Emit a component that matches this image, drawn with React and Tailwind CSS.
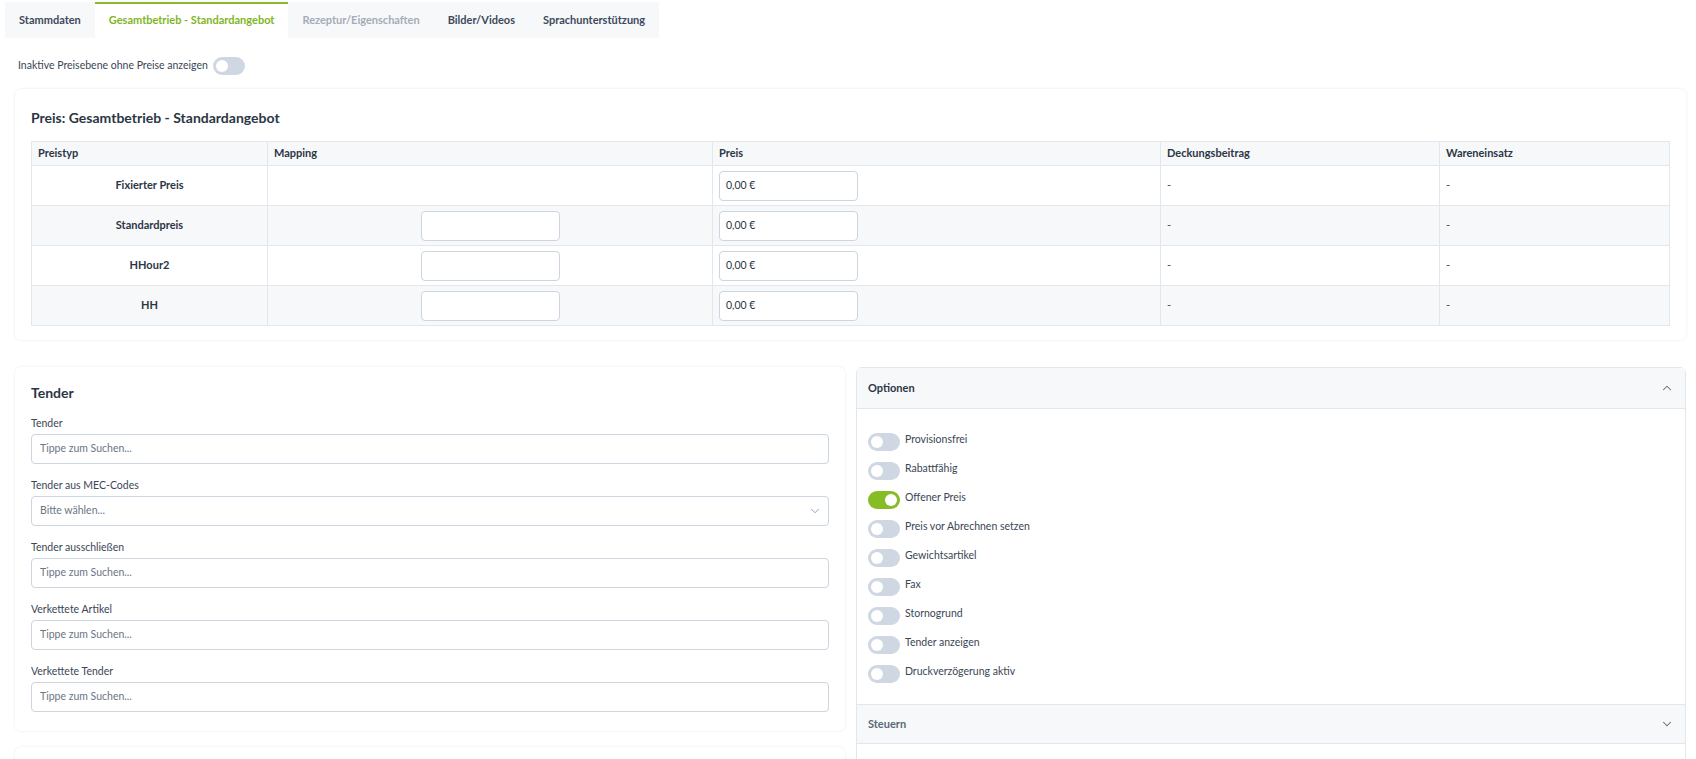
import React from "react";
import { ChevronDown, ChevronUp } from "lucide-react";

function Toggle({ on = false }) {
  return (
    <span
      className={
        "relative inline-block h-[18px] w-[32px] shrink-0 rounded-full " +
        (on ? "bg-[#86bc25]" : "bg-[#cfd7e2]")
      }
    >
      <span
        className={
          "absolute top-[3px] h-[12px] w-[12px] rounded-full bg-white " +
          (on ? "left-[17px]" : "left-[3px]")
        }
      />
    </span>
  );
}

const tabs = [
  { label: "Stammdaten", state: "normal" },
  { label: "Gesamtbetrieb - Standardangebot", state: "active" },
  { label: "Rezeptur/Eigenschaften", state: "disabled" },
  { label: "Bilder/Videos", state: "normal" },
  { label: "Sprachunterstützung", state: "normal" },
];

const rows = [
  { name: "Fixierter Preis", mapping: false },
  { name: "Standardpreis", mapping: true },
  { name: "HHour2", mapping: true },
  { name: "HH", mapping: true },
];

const fields = [
  { label: "Tender", placeholder: "Tippe zum Suchen..." },
  { label: "Tender aus MEC-Codes", placeholder: "Bitte wählen...", select: true },
  { label: "Tender ausschließen", placeholder: "Tippe zum Suchen..." },
  { label: "Verkettete Artikel", placeholder: "Tippe zum Suchen..." },
  { label: "Verkettete Tender", placeholder: "Tippe zum Suchen..." },
];

const options = [
  { label: "Provisionsfrei" },
  { label: "Rabattfähig" },
  { label: "Offener Preis", on: true },
  { label: "Preis vor Abrechnen setzen" },
  { label: "Gewichtsartikel" },
  { label: "Fax" },
  { label: "Stornogrund" },
  { label: "Tender anzeigen" },
  { label: "Druckverzögerung aktiv" },
];

export default function App() {
  return (
    <div className="h-[759px] overflow-hidden bg-white font-['Lato',sans-serif] text-[10.5px] text-[#3a4655]">
      {/* Tabs */}
      <div className="pl-[5px] pt-[2px]">
        <div className="inline-flex bg-[#f7f8fa]">
          {tabs.map((t) => (
            <div
              key={t.label}
              className={
                "flex h-[36px] items-center px-[14px] text-[11px] font-bold " +
                (t.state === "active"
                  ? "border-t-2 border-[#86bc25] bg-white pb-[2px] text-[#7fb51f]"
                  : t.state === "disabled"
                  ? "text-[#a3acb8]"
                  : "text-[#3d4a5a]")
              }
            >
              {t.label}
            </div>
          ))}
        </div>
      </div>

      {/* Inactive toggle */}
      <div className="mt-[19px] flex items-center gap-[5px] pl-[18px]">
        <span>Inaktive Preisebene ohne Preise anzeigen</span>
        <Toggle />
      </div>

      {/* Price card */}
      <div className="mx-[15px] mt-[14px] mr-[10px] rounded-[6px] bg-white px-4 pt-[20px] pb-[14px] shadow-[0_0_3px_rgba(0,0,0,0.09)]">
        <h2 className="mb-[14px] text-[14px] leading-[18px] font-bold text-[#2b3645]">
          Preis: Gesamtbetrieb - Standardangebot
        </h2>
        <table className="w-full table-fixed border-collapse text-[11px]">
          <colgroup>
            <col className="w-[236px]" />
            <col className="w-[445px]" />
            <col className="w-[448px]" />
            <col className="w-[279px]" />
            <col />
          </colgroup>
          <thead>
            <tr className="h-[24px] bg-[#f7f8fa]">
              {["Preistyp", "Mapping", "Preis", "Deckungsbeitrag", "Wareneinsatz"].map((h) => (
                <th
                  key={h}
                  className="border border-[#e2e7ee] px-[6px] text-left font-bold text-[#2b3645]"
                >
                  {h}
                </th>
              ))}
            </tr>
          </thead>
          <tbody>
            {rows.map((r, i) => (
              <tr key={r.name} className={"h-[40px] " + (i % 2 === 1 ? "bg-[#f7f8fa]" : "bg-white")}>
                <td className="border border-[#e2e7ee] px-[6px] text-center font-bold text-[#2b3645]">
                  {r.name}
                </td>
                <td className="border border-[#e2e7ee] px-[6px]">
                  {r.mapping && (
                    <div className="mx-auto h-[30px] w-[139px] rounded-[4px] border border-[#cdd5e0] bg-white" />
                  )}
                </td>
                <td className="border border-[#e2e7ee] px-[6px]">
                  <div className="flex h-[30px] w-[139px] items-center rounded-[4px] border border-[#cdd5e0] bg-white px-[6px] text-[10.5px] text-[#2b3645]">
                    0,00 €
                  </div>
                </td>
                <td className="border border-[#e2e7ee] px-[6px]">-</td>
                <td className="border border-[#e2e7ee] px-[6px]">-</td>
              </tr>
            ))}
          </tbody>
        </table>
      </div>

      {/* Lower section */}
      <div className="mt-[27px] ml-[15px] mr-[10px] grid grid-cols-2 items-start gap-[11px]">
        <div className="flex flex-col gap-[16px]">
          <div className="rounded-[6px] bg-white px-4 pt-[17px] pb-[19px] shadow-[0_0_3px_rgba(0,0,0,0.09)]">
            <h3 className="mb-[13px] text-[14px] leading-[18px] font-bold text-[#2b3645]">Tender</h3>
            <div className="flex flex-col gap-[13px]">
              {fields.map((f) => (
                <div key={f.label}>
                  <div className="mb-[3px] leading-[16px] text-[#3a4655]">{f.label}</div>
                  <div className="flex h-[30px] items-center justify-between rounded-[4px] border border-[#cdd5e0] bg-white pr-[6px] pl-[8px] text-[#6b7684]">
                    <span>{f.placeholder}</span>
                    {f.select && <ChevronDown size={14} strokeWidth={1.5} className="text-[#8a94a3]" />}
                  </div>
                </div>
              ))}
            </div>
          </div>
          <div className="h-[60px] rounded-[6px] bg-white shadow-[0_0_3px_rgba(0,0,0,0.09)]" />
        </div>

        <div className="rounded-t-[6px] border border-[#e2e7ee] bg-white">
          <div className="flex h-[41px] items-center justify-between border-b border-[#e2e7ee] bg-[#f7f8fa] px-[11px] text-[11px] font-bold text-[#2b3645]">
            <span>Optionen</span>
            <ChevronUp size={14} strokeWidth={1.75} className="text-[#5c6878]" />
          </div>
          <div className="flex flex-col px-[11px] pt-[18px] pb-[16px]">
            {options.map((o) => (
              <div key={o.label} className="flex h-[29px] items-center gap-[5px]">
                <Toggle on={o.on} />
                <span className="-mt-[3px] text-[#3a4655]">{o.label}</span>
              </div>
            ))}
          </div>
          <div className="flex h-[40px] items-center justify-between border-y border-[#e2e7ee] bg-[#f7f8fa] px-[11px] text-[11px] font-bold text-[#5c6878]">
            <span>Steuern</span>
            <ChevronDown size={14} strokeWidth={1.75} className="text-[#5c6878]" />
          </div>
          <div className="h-[60px] bg-white" />
        </div>
      </div>
    </div>
  );
}
